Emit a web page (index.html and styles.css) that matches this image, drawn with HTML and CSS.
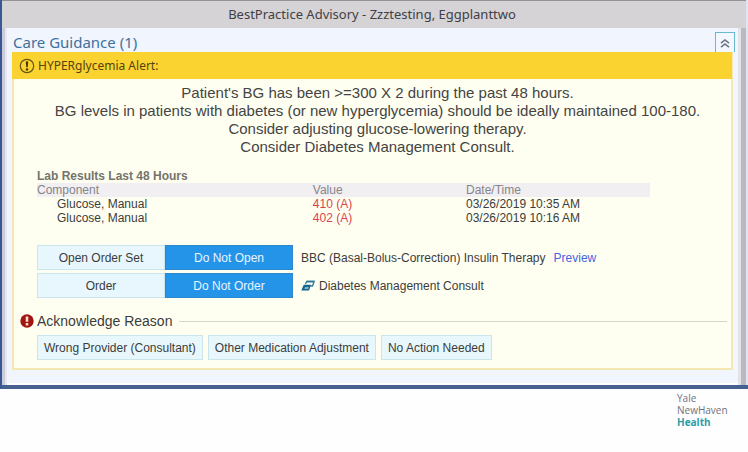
FILE: index.html
```html
<!DOCTYPE html>
<html lang="en">
<head>
<meta charset="utf-8">
<title>BestPractice Advisory</title>
<link rel="stylesheet" href="styles.css">
</head>
<body>
<main class="window">
  <h1 class="titlebar">BestPractice Advisory - Zzztesting, Eggplanttwo</h1>
  <div class="body">
    <header class="section-head">
      <h2>Care Guidance (1)</h2>
      <button class="collapse" type="button" aria-label="Collapse">
        <svg width="10" height="12" viewBox="0 0 10 12" fill="none" stroke="#6a7480" stroke-width="1.600"><path d="M1 6.200 5 3l4 3.200M1 10.200 5 7l4 3.200"/></svg>
      </button>
    </header>
    <section class="card">
      <h3 class="alert">
        <svg width="16" height="16" viewBox="0 0 16 16"><circle cx="8" cy="8" r="6.700" fill="none" stroke="#6b5514" stroke-width="1.200"/><path d="M6.800 3.500h2.400L8.700 9.300H7.300z" fill="#3f3208"/><circle cx="8" cy="11.400" r="1.200" fill="#3f3208"/></svg>
        HYPERglycemia Alert:
      </h3>
      <div class="content">
        <p class="message">Patient's BG has been &gt;=300 X 2 during the past 48 hours.<br>BG levels in patients with diabetes (or new hyperglycemia) should be ideally maintained 100-180.<br>Consider adjusting glucose-lowering therapy.<br>Consider Diabetes Management Consult.</p>
        <table class="labs">
          <caption>Lab Results Last 48 Hours</caption>
          <thead><tr><th class="component">Component</th><th class="value">Value</th><th>Date/Time</th></tr></thead>
          <tbody>
            <tr><td class="name">Glucose, Manual</td><td class="abnormal">410 (A)</td><td>03/26/2019 10:35 AM</td></tr>
            <tr><td class="name">Glucose, Manual</td><td class="abnormal">402 (A)</td><td>03/26/2019 10:16 AM</td></tr>
          </tbody>
        </table>
        <div class="orders">
          <div class="order">
            <div class="choice"><button type="button">Open Order Set</button><button type="button" class="selected">Do Not Open</button></div>
            <span>BBC (Basal-Bolus-Correction) Insulin Therapy</span>
            <a href="#">Preview</a>
          </div>
          <div class="order">
            <div class="choice"><button type="button">Order</button><button type="button" class="selected">Do Not Order</button></div>
            <svg width="14" height="12" viewBox="0 0 14 12"><path d="M4.500 4 5.800 1.300h7.400L11.500 6H9.800" fill="none" stroke="#2f7899" stroke-width="1.300"/><path d="M5.500.700h8l-.6 1.800H4.900z" fill="#2f7899"/><path d="M2.700 4.800h7.500L8 10.500H.300z" fill="#17668f"/><path d="M4 7.300h3.800l-.6 1.500H3.400z" fill="#a9d0de"/></svg>
            <span>Diabetes Management Consult</span>
          </div>
        </div>
      </div>
      <div class="reason-head">
        <svg width="14" height="14" viewBox="0 0 14 14"><circle cx="7" cy="7" r="6.700" fill="#a3150f"/><path d="M5.700 2.500h2.600v5.200H5.700zM5.700 9h2.600v2.500H5.700z" fill="#f7dedb"/></svg>
        <h4>Acknowledge Reason</h4>
        <span class="rule"></span>
      </div>
      <div class="reasons">
        <button type="button">Wrong Provider (Consultant)</button>
        <button type="button">Other Medication Adjustment</button>
        <button type="button">No Action Needed</button>
      </div>
    </section>
  </div>
</main>
<footer class="brand">Yale<br>NewHaven<br><strong>Health</strong></footer>
</body>
</html>
```
FILE: styles.css
```css
* { box-sizing: border-box; }
body {
  margin: 0;
  background: #fefefe;
  color: #3c3c3c;
  font: 12px/14px "Liberation Sans", Arial, sans-serif;
}
h1, h2, h3, h4, p { margin: 0; font-weight: 400; }
button { font: inherit; color: inherit; }
svg { flex: none; }

.window {
  padding: 0 10px 2px 5px;
  border-left: 2px solid #3a5795;
  border-bottom: 4px solid #44618f;
  background: linear-gradient(to right, #cbcbdc 0 3px, #e6e8f3 3px 5px, transparent 5px calc(100% - 10px), #e2e2ea calc(100% - 10px) calc(100% - 7px), #b9b9be calc(100% - 7px) calc(100% - 2px), #dfe5f2 calc(100% - 2px));
}
.titlebar {
  margin: 0 -8px 0 -5px;
  height: 28px;
  padding-right: 4px;
  border-top: 1px solid #929296;
  background: #d5d3d6;
  color: #414045;
  font: 13px/26px "Noto Sans", sans-serif;
  text-align: center;
}
.body {
  padding: 4px 5px 13px;
  background: #f0f5fe;
}
.section-head {
  display: flex;
  justify-content: space-between;
  align-items: flex-end;
  height: 20px;
  margin-right: -2px;
  padding-left: 1px;
}
.section-head h2 {
  color: #3f719b;
  font: 15px/20px "Noto Sans", sans-serif;
}
.collapse {
  display: flex;
  justify-content: center;
  align-items: center;
  width: 20px;
  height: 20px;
  padding: 0;
  border: 1px solid #6bb8d3;
  border-bottom: 0;
  background: #f3f8fe;
}
.card {
  border: 2px solid #f5e7b1;
  border-top: 0;
  background: #fffff1;
}
.alert {
  display: flex;
  align-items: center;
  gap: 3px;
  height: 27px;
  margin: 0 -1px 0 -2px;
  padding-left: 7px;
  background: #fad330;
  color: #54430d;
  font: 12px/26px "Noto Sans", sans-serif;
}
.content { padding: 5px 13px 0 23px; }
.message {
  color: #444;
  font-size: 15px;
  line-height: 18px;
  text-align: center;
}
.labs {
  width: 90%;
  margin-top: 13px;
  border-collapse: collapse;
  table-layout: fixed;
  text-align: left;
}
.labs caption {
  color: #74746c;
  font-weight: 700;
  text-align: left;
}
.labs th {
  padding: 0;
  background: #f1eff2;
  color: #85858a;
  font-weight: 400;
}
.labs td { padding: 0; }
.labs .component { width: 45%; }
.labs .value { width: 25%; }
.labs .name { padding-left: 20px; }
.labs .abnormal { color: #dc4350; }

.orders {
  display: grid;
  gap: 3px;
  margin-top: 20px;
}
.order {
  display: flex;
  align-items: center;
  gap: 4px;
}
.order a {
  margin-left: 4px;
  color: #4764df;
  text-decoration: none;
}
.choice {
  display: grid;
  grid-template-columns: 1fr 1fr;
  width: 256px;
  margin-right: 4px;
}
.choice button {
  height: 25px;
  padding: 0;
  border: 1px solid #c9e6ee;
  background: #e7f7fd;
}
.choice .selected {
  border-color: #2c87cd;
  background: #2494e8;
  color: #e8f5ff;
}
.reason-head {
  display: flex;
  align-items: center;
  gap: 3px;
  margin-top: 14px;
  padding: 0 4px 0 6px;
}
.reason-head h4 { font-size: 14px; line-height: 18px; }
.rule {
  flex: 1;
  height: 1px;
  margin-left: 4px;
  background: #d4d4cd;
}
.reasons {
  display: flex;
  gap: 5px;
  padding: 5px 23px 8px;
}
.reasons button {
  height: 25px;
  padding: 0 6px;
  border: 1px solid #cbe5ec;
  background: #e8f7fb;
}
.brand {
  width: 71px;
  margin: 3px 0 0 auto;
  color: #6d7280;
  font: 10px/12px "Open Sans", sans-serif;
}
.brand strong { color: #2a9da8; }
```
